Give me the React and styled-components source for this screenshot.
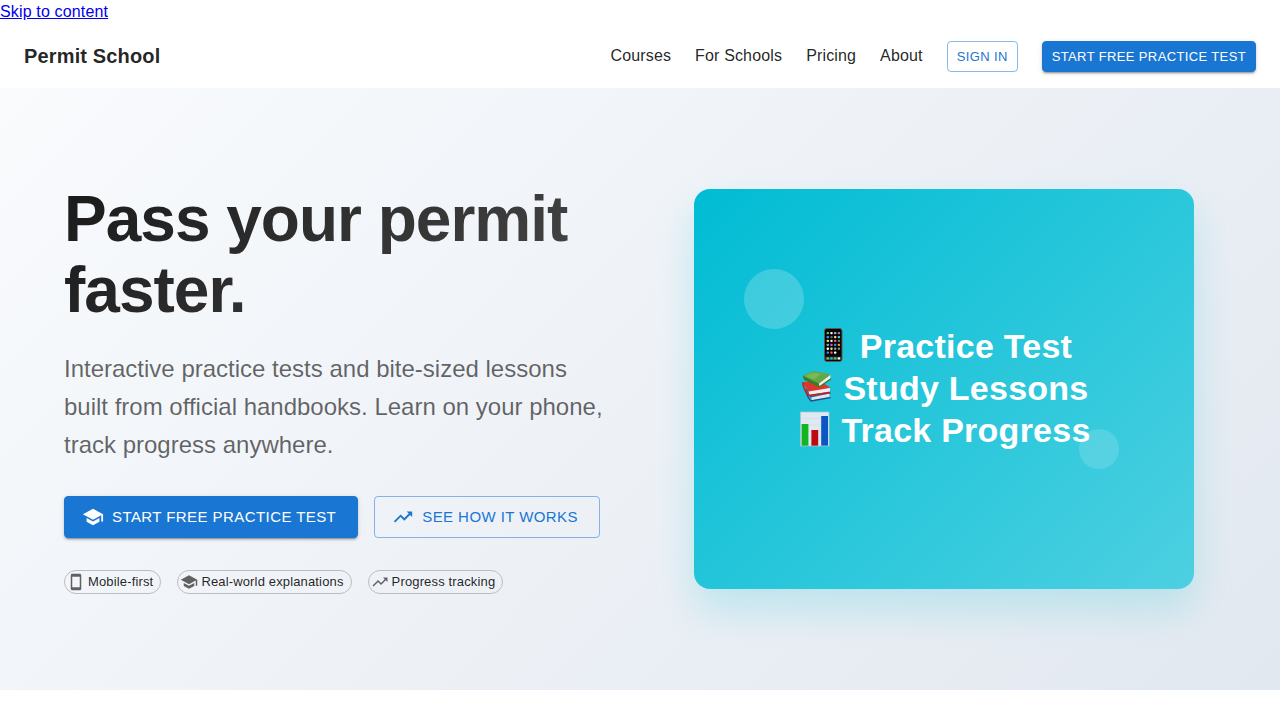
import React from "react";
import styled, { createGlobalStyle, css } from "styled-components";
import { MdSchool, MdSmartphone, MdTrendingUp } from "react-icons/md";

const GlobalStyle = createGlobalStyle`
  *, *::before, *::after { box-sizing: border-box; }
  body {
    margin: 0;
    background: #fff;
    color: rgba(0, 0, 0, 0.87);
    font-family: "Liberation Sans", Helvetica, Arial, sans-serif;
    font-size: 16px;
    letter-spacing: 0.00938em;
    line-height: 24px;
  }
`;

const SkipLink = styled.a`
  color: #0000ee;
  display: inline-block;
  vertical-align: top;
`;

const Header = styled.header`
  display: flex;
  align-items: center;
  justify-content: space-between;
  min-height: 64px;
  padding: 0 24px;
  background: #fff;
`;

const Brand = styled.a`
  color: inherit;
  font-size: 20px;
  font-weight: 700;
  line-height: 32px;
  text-decoration: none;
`;

const Nav = styled.nav`
  display: flex;
  align-items: center;
  gap: 24px;
`;

const NavLink = styled.a`
  color: inherit;
  text-decoration: none;
`;

const sizes = {
  small: css`
    font-size: 13px;
    line-height: 23px;
    padding: 3px 9px;
  `,
  large: css`
    font-size: 15px;
    line-height: 26px;
    padding: 7px 21px;
  `,
};

const variants = {
  contained: css`
    background: #1976d2;
    border-color: #1976d2;
    color: #fff;
    box-shadow: 0 3px 1px -2px rgba(0, 0, 0, 0.2), 0 2px 2px rgba(0, 0, 0, 0.14),
      0 1px 5px rgba(0, 0, 0, 0.12);
  `,
  outlined: css`
    background: transparent;
    border-color: rgba(25, 118, 210, 0.5);
    color: #1976d2;
  `,
};

const Button = styled.button`
  display: inline-flex;
  align-items: center;
  justify-content: center;
  border: 1px solid;
  border-radius: 4px;
  cursor: pointer;
  font-family: inherit;
  letter-spacing: 0.02857em;
  text-transform: uppercase;
  white-space: nowrap;
  ${({ $size }) => sizes[$size]}
  ${({ $variant }) => variants[$variant]}

  svg {
    width: 22px;
    height: 22px;
    margin: 0 8px 0 -4px;
  }
`;

const Hero = styled.section`
  padding: 96px 0;
  background: linear-gradient(135deg, #f9fbfd 0%, #e2e8f0 100%);
`;

const HeroGrid = styled.div`
  display: grid;
  grid-template-columns: 1fr 1fr;
  align-items: center;
  gap: 64px;
  max-width: 1200px;
  margin: 0 auto;
  padding: 0 24px;
`;

const Title = styled.h1`
  margin: 0 0 24px;
  background: linear-gradient(135deg, #1a1a1a 0%, #4a4a4a 100%);
  background-clip: text;
  color: transparent;
  font-size: 64px;
  font-weight: 700;
  letter-spacing: -1px;
  line-height: 71px;
`;

const Lead = styled.p`
  margin: 0 0 32px;
  color: rgba(0, 0, 0, 0.6);
  font-size: 24px;
  letter-spacing: normal;
  line-height: 38px;
`;

const Actions = styled.div`
  display: flex;
  flex-wrap: wrap;
  gap: 16px;
  margin-bottom: 32px;
`;

const ChipList = styled.ul`
  display: flex;
  flex-wrap: wrap;
  gap: 16px;
  margin: 0;
  padding: 0;
  list-style: none;
`;

const Chip = styled.li`
  display: inline-flex;
  align-items: center;
  gap: 3px;
  height: 24px;
  padding: 0 7px 0 2px;
  border: 1px solid #bdbdbd;
  border-radius: 12px;
  font-size: 13px;
  white-space: nowrap;

  svg {
    width: 18px;
    height: 18px;
    color: #616161;
  }
`;

const Preview = styled.div`
  position: relative;
  display: flex;
  align-items: center;
  justify-content: center;
  justify-self: center;
  width: 100%;
  max-width: 500px;
  height: 400px;
  border-radius: 16px;
  background: linear-gradient(135deg, #00bcd4 0%, #4dd0e1 100%);
  box-shadow: 0 20px 40px rgba(0, 188, 212, 0.2);
`;

const Bubble = styled.span`
  position: absolute;
  border-radius: 50%;
  ${({ $place }) =>
    $place === "top"
      ? css`
          top: 20%;
          left: 10%;
          width: 60px;
          height: 60px;
          background: rgba(255, 255, 255, 0.2);
        `
      : css`
          right: 15%;
          bottom: 30%;
          width: 40px;
          height: 40px;
          background: rgba(255, 255, 255, 0.15);
        `}
`;

const FeatureList = styled.ul`
  position: relative;
  display: flex;
  flex-direction: column;
  align-items: center;
  margin: 0;
  padding: 0 0 2px;
  color: #fff;
  font-size: 34px;
  font-weight: 700;
  letter-spacing: 0.00735em;
  line-height: 42px;
  list-style: none;
`;

const Feature = styled.li`
  display: flex;
  align-items: center;
  gap: 10px;

  svg {
    width: 34px;
    height: 36px;
    margin-bottom: 2px;
  }
`;

const appColors = [
  ["#4cd964", "#f5f5f5", "#c79be0", "#8e8e93"],
  ["#2e9df7", "#666", "#e8d9b0", "#5ac8d8"],
  ["#ffd84d", "#e8e8e8", "#ff5d4d", "#777"],
  ["#4ac6d8", "#e64be0", "#2e8df7", "#ff9500"],
  ["#fff", "#ffdd55", "#999", "#888"],
  ["#1fa2f2", "#ff5e57", "#fff", "#000"],
];

function PhoneIcon() {
  return (
    <svg viewBox="0 0 34 36" aria-hidden="true">
      <rect x="8.5" y="1.5" width="17.5" height="33" rx="2.4" fill="#050505" stroke="#5b5654" />
      {appColors.map((row, r) =>
        row.map((fill, c) => (
          <rect key={`${r}-${c}`} x={10.6 + c * 3.7} y={5 + r * 3.9} width="2.4" height="2.3" rx="0.8" fill={fill} />
        ))
      )}
      <rect x="9.2" y="29.7" width="16" height="3.4" fill="#3b3f42" />
      {["#4cd964", "#1fb6ff", "#43d65c", "#fff"].map((fill, c) => (
        <rect key={c} x={10.6 + c * 3.7} y="30.2" width="2.4" height="2.4" rx="0.8" fill={fill} />
      ))}
    </svg>
  );
}

function BooksIcon() {
  return (
    <svg viewBox="0 0 34 36" aria-hidden="true">
      <path d="M6 20 L30 22 L31.5 25 L12 30 Z" fill="#2f62ae" />
      <path d="M12 28.5 L30.5 24.5 V27.8 L13 31.2 Z" fill="#dfe5ec" />
      <path d="M7 22 Q8 28 12 32 L31.5 28.6" fill="none" stroke="#244d8d" strokeWidth="1.4" />
      <path d="M3.6 13 L20 12 L31.5 18.5 L10 24 Z" fill="#e0352a" />
      <path d="M9.5 22.5 L31 19 V22.6 L10.5 26 Z" fill="#eef0f1" />
      <path d="M3.8 13.4 Q4.5 20 9.2 26.6 L31.4 23.6" fill="none" stroke="#c3241d" strokeWidth="1.7" />
      <path d="M3.7 6.6 L14.3 2.3 L32 5.2 L19.8 14.8 Z" fill="#65a744" />
      <path d="M6 7 L14.3 3.4 L22 5 L15 10.5 Z" fill="#79b953" />
      <path d="M20 14.6 L31.4 6 V9.6 L20.6 17.8 Z" fill="#eef2e9" />
      <path d="M3.7 6.6 L19.8 14.8 L20.2 18.6 L5 10.8 Z" fill="#397c2a" />
      <path d="M20.2 18 L32 9.8" fill="none" stroke="#397427" strokeWidth="1.2" />
    </svg>
  );
}

function ChartIcon() {
  return (
    <svg viewBox="0 0 34 36" aria-hidden="true">
      <rect x="3.5" y="1" width="28.5" height="34" fill="#dfe9f2" />
      <path
        d="M3.5 7.5 h28.5 M3.5 14 h28.5 M3.5 20.5 h28.5 M3.5 27 h28.5"
        stroke="#cfdce7"
        strokeWidth="0.6"
      />
      <rect x="4.6" y="13" width="6.8" height="22" fill="#10b51f" />
      <rect x="14.4" y="19" width="6.8" height="16" fill="#bd0a10" />
      <rect x="24.2" y="5" width="6.8" height="30" fill="#0b56c4" />
      <rect x="3.5" y="1" width="28.5" height="34" fill="none" stroke="#abc7d6" strokeWidth="0.8" />
    </svg>
  );
}

const navItems = ["Courses", "For Schools", "Pricing", "About"];

const chips = [
  { label: "Mobile-first", Icon: MdSmartphone },
  { label: "Real-world explanations", Icon: MdSchool },
  { label: "Progress tracking", Icon: MdTrendingUp },
];

const features = [
  { label: "Practice Test", Icon: PhoneIcon },
  { label: "Study Lessons", Icon: BooksIcon },
  { label: "Track Progress", Icon: ChartIcon },
];

export default function App() {
  return (
    <>
      <GlobalStyle />
      <SkipLink href="#main">Skip to content</SkipLink>
      <Header>
        <Brand href="#home">Permit School</Brand>
        <Nav aria-label="Main">
          {navItems.map((item) => (
            <NavLink key={item} href={`#${item.toLowerCase().replace(" ", "-")}`}>
              {item}
            </NavLink>
          ))}
          <Button type="button" $size="small" $variant="outlined">Sign in</Button>
          <Button type="button" $size="small" $variant="contained">Start free practice test</Button>
        </Nav>
      </Header>
      <main id="main">
        <Hero>
          <HeroGrid>
            <div>
              <Title>Pass your permit faster.</Title>
              <Lead>
                Interactive practice tests and bite-sized lessons built from official handbooks.
                Learn on your phone, track progress anywhere.
              </Lead>
              <Actions>
                <Button type="button" $size="large" $variant="contained">
                  <MdSchool aria-hidden="true" />
                  Start free practice test
                </Button>
                <Button type="button" $size="large" $variant="outlined">
                  <MdTrendingUp aria-hidden="true" />
                  See how it works
                </Button>
              </Actions>
              <ChipList>
                {chips.map(({ label, Icon }) => (
                  <Chip key={label}>
                    <Icon aria-hidden="true" />
                    {label}
                  </Chip>
                ))}
              </ChipList>
            </div>
            <Preview>
              <Bubble $place="top" />
              <Bubble $place="bottom" />
              <FeatureList>
                {features.map(({ label, Icon }) => (
                  <Feature key={label}>
                    <Icon />
                    {label}
                  </Feature>
                ))}
              </FeatureList>
            </Preview>
          </HeroGrid>
        </Hero>
      </main>
    </>
  );
}
